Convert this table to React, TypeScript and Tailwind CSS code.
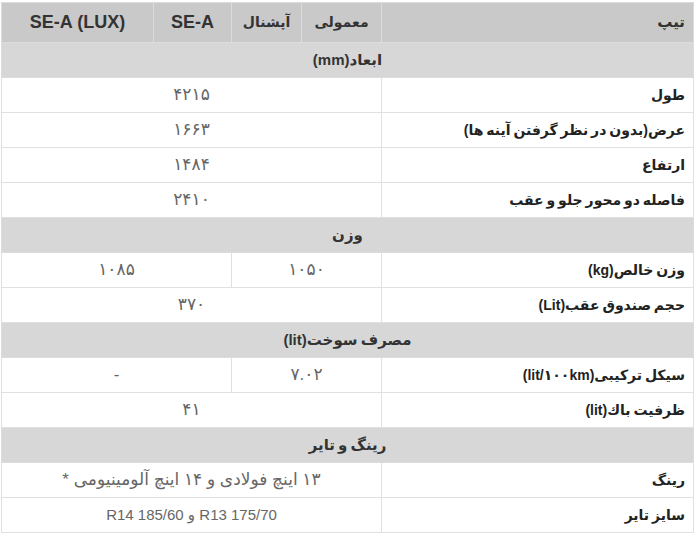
const fa = { fontFamily: '"Liberation Sans", "DejaVu Sans", sans-serif' };

type Row =
  | { kind: "section"; title: string }
  | { kind: "full"; label: string; value: string; big?: boolean }
  | { kind: "split"; label: string; a: string; b: string };

const rows: Row[] = [
  { kind: "section", title: "ابعاد(mm)" },
  { kind: "full", label: "طول", value: "۴۲۱۵", big: true },
  { kind: "full", label: "عرض(بدون در نظر گرفتن آینه ها)", value: "۱۶۶۳", big: true },
  { kind: "full", label: "ارتفاع", value: "۱۴۸۴", big: true },
  { kind: "full", label: "فاصله دو محور جلو و عقب", value: "۲۴۱۰", big: true },
  { kind: "section", title: "وزن" },
  { kind: "split", label: "وزن خالص(kg)", a: "۱۰۵۰", b: "۱۰۸۵" },
  { kind: "full", label: "حجم صندوق عقب(Lit)", value: "۳۷۰", big: true },
  { kind: "section", title: "مصرف سوخت(lit)" },
  { kind: "split", label: "سیکل ترکیبی(lit/۱۰۰km)", a: "۷.۰۲", b: "-" },
  { kind: "full", label: "ظرفیت باك(lit)", value: "۴۱", big: true },
  { kind: "section", title: "رینگ و تایر" },
  { kind: "full", label: "رینگ", value: "۱۳ اینچ فولادی و ۱۴ اینچ آلومینیومی *", big: true },
  { kind: "full", label: "سایز تایر", value: "R13 175/70 و R14 185/60" },
];

export default function App() {
  return (
    <div className="w-[696px] h-[533px] bg-white p-[2px]" dir="rtl" style={fa}>
      <table className="w-[692px] table-fixed border-collapse border border-[#dedede]">
        <colgroup>
          <col className="w-[312px]" />
          <col className="w-[80px]" />
          <col className="w-[70px]" />
          <col className="w-[78px]" />
          <col className="w-[152px]" />
        </colgroup>
        <thead>
          <tr className="h-[40px] bg-[#c9c9c9] text-[#333]">
            <th className="border border-[#dcdcdc] px-2 text-right text-[15px] font-bold">تیپ</th>
            <th className="border border-[#dcdcdc] text-center text-[14px] font-bold">معمولی</th>
            <th className="border border-[#dcdcdc] text-center text-[14px] font-bold">آپشنال</th>
            <th className="border border-[#dcdcdc] text-center text-[18px] font-bold">SE-A</th>
            <th className="border border-[#dcdcdc] text-center text-[18px] font-bold">SE-A (LUX)</th>
          </tr>
        </thead>
        <tbody>
          {rows.map((r, i) => {
            if (r.kind === "section") {
              return (
                <tr key={i} className="h-[35px] bg-[#d7d7d7]">
                  <td colSpan={5} className="border border-[#dcdcdc] text-center text-[15px] font-bold text-[#333] [word-spacing:-1px]">
                    {r.title}
                  </td>
                </tr>
              );
            }
            return (
              <tr key={i} className="h-[35px] bg-white">
                <td className="border border-[#e0e0e0] px-2 text-right text-[14px] font-bold text-[#222] [word-spacing:-1px]">
                  {r.label}
                </td>
                {r.kind === "full" ? (
                  <td
                    colSpan={4}
                    className={
                      r.big
                        ? "border border-[#e0e0e0] text-center text-[17px] text-[#666]"
                        : "border border-[#e0e0e0] text-center text-[15px] text-[#666]"
                    }
                  >
                    {r.value}
                  </td>
                ) : (
                  <>
                    <td colSpan={2} className="border border-[#e0e0e0] text-center text-[17px] text-[#666]">
                      {r.a}
                    </td>
                    <td colSpan={2} className="border border-[#e0e0e0] text-center text-[17px] text-[#666]">
                      {r.b}
                    </td>
                  </>
                )}
              </tr>
            );
          })}
        </tbody>
      </table>
    </div>
  );
}
